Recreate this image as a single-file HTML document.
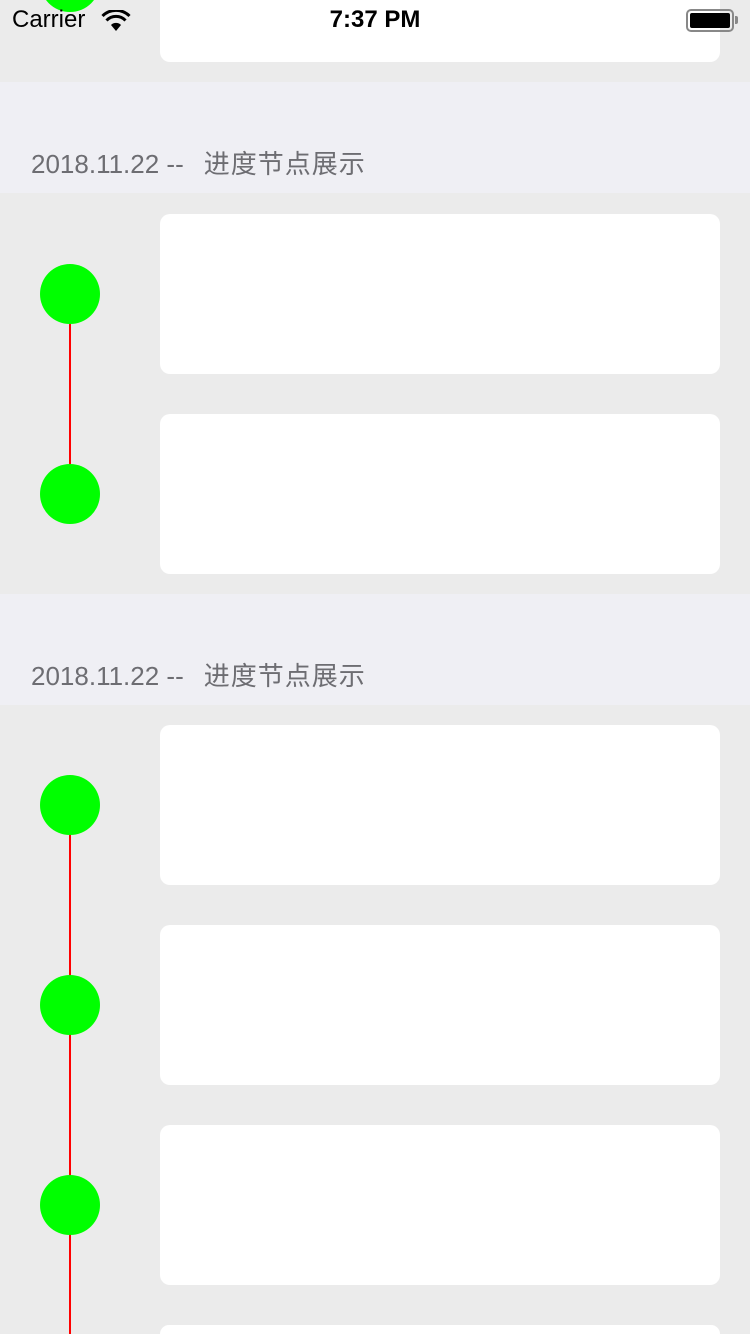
<!DOCTYPE html>
<html style="width:750px;height:1334px;overflow:hidden"><head><meta charset="utf-8"><style>
*{margin:0;padding:0;box-sizing:border-box}
body{width:750px;height:1334px;overflow:hidden;background:#ebebeb;position:relative;font-family:"Liberation Sans","Noto Sans CJK SC",sans-serif}
.a{position:absolute}
.card{position:absolute;left:160px;width:560px;height:160px;background:#fff;border-radius:10px}
.dot{position:absolute;left:40px;width:60px;height:60px;border-radius:50%;background:#00ff00}
.line{position:absolute;left:69px;width:2px;background:#ff0000}
.hdr{position:absolute;left:0;width:750px;height:111px;background:#efeff4}
.hdr span{position:absolute;left:31px;bottom:12px;font-size:26px;color:#6d6d72;white-space:nowrap}
.hdr b{font-weight:normal;margin-left:20px;letter-spacing:1px}
</style></head><body>
<div class="card" style="top:-98px"></div>
<div class="dot" style="top:-48px"></div>
<div class="hdr" style="top:82px"><span>2018.11.22 --<b>进度节点展示</b></span></div>
<div class="line" style="top:324px;height:140px"></div>
<div class="card" style="top:214px"></div>
<div class="dot" style="top:264px"></div>
<div class="card" style="top:414px"></div>
<div class="dot" style="top:464px"></div>
<div class="hdr" style="top:594px"><span>2018.11.22 --<b>进度节点展示</b></span></div>
<div class="line" style="top:835px;height:499px"></div>
<div class="card" style="top:725px"></div>
<div class="dot" style="top:775px"></div>
<div class="card" style="top:925px"></div>
<div class="dot" style="top:975px"></div>
<div class="card" style="top:1125px"></div>
<div class="dot" style="top:1175px"></div>
<div class="card" style="top:1325px;height:9px;border-radius:10px 10px 0 0"></div>
<div class="a" style="left:12px;top:6px;font-size:24px;color:#000">Carrier</div>
<svg class="a" style="left:101px;top:10px" width="30" height="22" viewBox="0 0 30 22"><path d="M15 21 L10 15 A7 7 0 0 1 20 15 Z" fill="#000"/><path d="M5.5 10.5 A13 13 0 0 1 24.5 10.5" stroke="#000" stroke-width="3" fill="none"/><path d="M1.5 6 A19 19 0 0 1 28.5 6" stroke="#000" stroke-width="3" fill="none"/></svg>
<div class="a" style="left:0;width:750px;text-align:center;top:6px;font-size:24px;font-weight:bold;color:#000">7:37 PM</div>
<div class="a" style="left:686px;top:9px;width:48px;height:23px;border:2px solid #888;border-radius:5px;padding:2px"><div style="width:100%;height:100%;background:#000;border-radius:2px"></div></div>
<div class="a" style="left:735px;top:16px;width:3px;height:8px;background:#888;border-radius:0 2px 2px 0"></div>
</body></html>
